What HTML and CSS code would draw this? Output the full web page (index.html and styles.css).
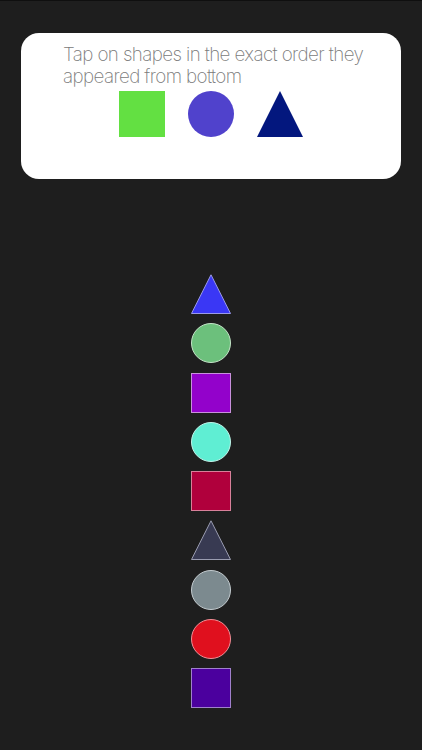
FILE: index.html
```html
<!DOCTYPE html>
<html>
<head>
<meta charset="utf-8">
<link rel="stylesheet" href="styles.css">
</head>
<body>
<div class="screen">
  <div class="card">
    <p class="prompt">Tap on shapes in the exact order they appeared from bottom</p>
    <div class="targets">
      <svg class="target" viewBox="0 0 46 46"><rect x="0" y="0" width="46" height="46" fill="#63e042"/></svg>
      <svg class="target" viewBox="0 0 46 46"><circle cx="23" cy="23" r="23" fill="#5042cc"/></svg>
      <svg class="target" viewBox="0 0 46 46"><polygon points="23,0 46,46 0,46" fill="#03177e"/></svg>
    </div>
  </div>
  <div class="stack">
    <svg class="shape" viewBox="0 0 40 40"><polygon points="20,0.8 39.5,39.5 0.5,39.5" fill="#3a37f5" stroke="#9a9ae8" stroke-width="1"/></svg>
    <svg class="shape" viewBox="0 0 40 40"><circle cx="20" cy="20" r="19.5" fill="#6cc07c" stroke="#c4e4c8" stroke-width="1"/></svg>
    <svg class="shape" viewBox="0 0 40 40"><rect x="0.5" y="0.5" width="39" height="39" fill="#9302cb" stroke="#c890dc" stroke-width="1"/></svg>
    <svg class="shape" viewBox="0 0 40 40"><circle cx="20" cy="20" r="19.5" fill="#5feed3" stroke="#c0f5ea" stroke-width="1"/></svg>
    <svg class="shape" viewBox="0 0 40 40"><rect x="0.5" y="0.5" width="39" height="39" fill="#b0003c" stroke="#d8809a" stroke-width="1"/></svg>
    <svg class="shape" viewBox="0 0 40 40"><polygon points="20,0.8 39.5,39.5 0.5,39.5" fill="#383a52" stroke="#9a9cb0" stroke-width="1"/></svg>
    <svg class="shape" viewBox="0 0 40 40"><circle cx="20" cy="20" r="19.5" fill="#7c8a8f" stroke="#c4ccd0" stroke-width="1"/></svg>
    <svg class="shape" viewBox="0 0 40 40"><circle cx="20" cy="20" r="19.5" fill="#e0101e" stroke="#f09098" stroke-width="1"/></svg>
    <svg class="shape" viewBox="0 0 40 40"><rect x="0.5" y="0.5" width="39" height="39" fill="#4b009e" stroke="#a080cc" stroke-width="1"/></svg>
  </div>
</div>
</body>
</html>
```

FILE: styles.css
```css
html, body {
  margin: 0;
  padding: 0;
  background: #1e1e1e;
}
body {
  border-top: 1px solid #0f0f0f;
  min-height: 749px;
  font-family: "Inter", "Liberation Sans", sans-serif;
}
.screen {
  display: flex;
  flex-direction: column;
  align-items: center;
  padding-top: 32px;
}
.card {
  box-sizing: border-box;
  width: 380px;
  height: 146px;
  background: #ffffff;
  border-radius: 18px;
  padding: 11px 30px 0 42px;
}
.prompt {
  margin: 0;
  font-size: 18.8px;
  line-height: 22px;
  font-weight: 200;
  color: #7a7a7a;
  letter-spacing: -0.6px;
}
.targets {
  display: flex;
  justify-content: center;
  gap: 23px;
  margin-top: 3px;
  margin-left: -12px;
}
.target {
  width: 46px;
  height: 46px;
  display: block;
}
.stack {
  display: flex;
  flex-direction: column;
  align-items: center;
  gap: 9.25px;
  margin-top: 95px;
}
.shape {
  width: 40px;
  height: 40px;
  display: block;
}
```
